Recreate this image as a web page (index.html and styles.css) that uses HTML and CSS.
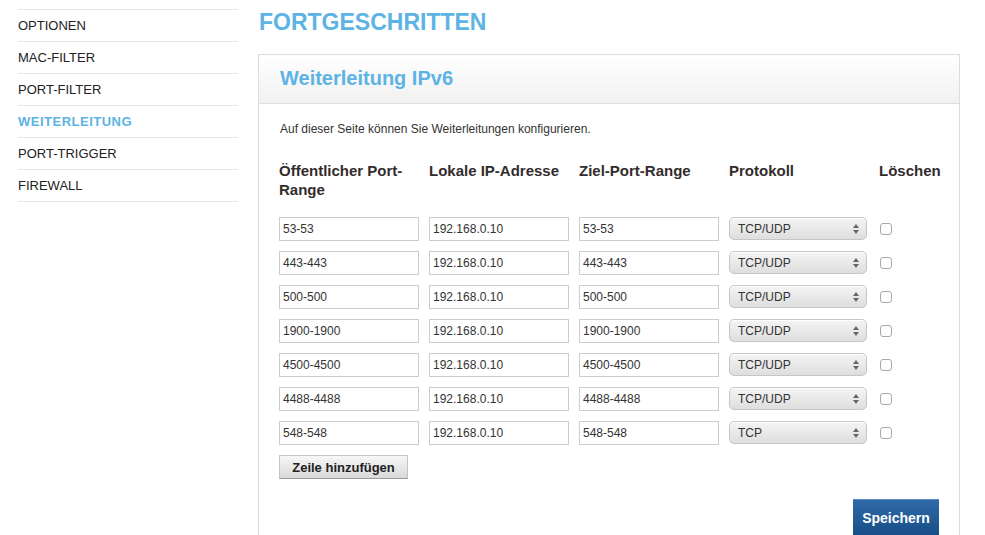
FILE: index.html
```html
<!DOCTYPE html>
<html lang="de">
<head>
    <meta charset="UTF-8">
    <title>Weiterleitung IPv6</title>
    <link rel="stylesheet" href="styles.css">
</head>
<body>
    <div class="page">
        <div class="sidebar">
            <ul class="menu">
                <li>OPTIONEN</li>
                <li>MAC-FILTER</li>
                <li>PORT-FILTER</li>
                <li class="active">WEITERLEITUNG</li>
                <li>PORT-TRIGGER</li>
                <li>FIREWALL</li>
            </ul>
        </div>

        <div class="main">
            <h1>FORTGESCHRITTEN</h1>

            <div class="panel">
                <div class="panel-header">
                    <h2>Weiterleitung IPv6</h2>
                </div>
                <div class="panel-body">
                    <p class="desc">Auf dieser Seite können Sie Weiterleitungen konfigurieren.</p>

                    <div class="grid">
                        <div class="th">Öffentlicher Port-Range</div>
                        <div class="th">Lokale IP-Adresse</div>
                        <div class="th">Ziel-Port-Range</div>
                        <div class="th">Protokoll</div>
                        <div class="th">Löschen</div>

                        <input type="text" value="53-53">
                        <input type="text" value="192.168.0.10">
                        <input type="text" value="53-53">
                        <div class="select"><span>TCP/UDP</span><svg width="6" height="10" viewBox="0 0 6 10"><path d="M3 0 L6 4 L0 4 Z M0 6 L6 6 L3 10 Z" fill="#666"/></svg></div>
                        <div class="cell"><input type="checkbox"></div>

                        <input type="text" value="443-443">
                        <input type="text" value="192.168.0.10">
                        <input type="text" value="443-443">
                        <div class="select"><span>TCP/UDP</span><svg width="6" height="10" viewBox="0 0 6 10"><path d="M3 0 L6 4 L0 4 Z M0 6 L6 6 L3 10 Z" fill="#666"/></svg></div>
                        <div class="cell"><input type="checkbox"></div>

                        <input type="text" value="500-500">
                        <input type="text" value="192.168.0.10">
                        <input type="text" value="500-500">
                        <div class="select"><span>TCP/UDP</span><svg width="6" height="10" viewBox="0 0 6 10"><path d="M3 0 L6 4 L0 4 Z M0 6 L6 6 L3 10 Z" fill="#666"/></svg></div>
                        <div class="cell"><input type="checkbox"></div>

                        <input type="text" value="1900-1900">
                        <input type="text" value="192.168.0.10">
                        <input type="text" value="1900-1900">
                        <div class="select"><span>TCP/UDP</span><svg width="6" height="10" viewBox="0 0 6 10"><path d="M3 0 L6 4 L0 4 Z M0 6 L6 6 L3 10 Z" fill="#666"/></svg></div>
                        <div class="cell"><input type="checkbox"></div>

                        <input type="text" value="4500-4500">
                        <input type="text" value="192.168.0.10">
                        <input type="text" value="4500-4500">
                        <div class="select"><span>TCP/UDP</span><svg width="6" height="10" viewBox="0 0 6 10"><path d="M3 0 L6 4 L0 4 Z M0 6 L6 6 L3 10 Z" fill="#666"/></svg></div>
                        <div class="cell"><input type="checkbox"></div>

                        <input type="text" value="4488-4488">
                        <input type="text" value="192.168.0.10">
                        <input type="text" value="4488-4488">
                        <div class="select"><span>TCP/UDP</span><svg width="6" height="10" viewBox="0 0 6 10"><path d="M3 0 L6 4 L0 4 Z M0 6 L6 6 L3 10 Z" fill="#666"/></svg></div>
                        <div class="cell"><input type="checkbox"></div>

                        <input type="text" value="548-548">
                        <input type="text" value="192.168.0.10">
                        <input type="text" value="548-548">
                        <div class="select"><span>TCP</span><svg width="6" height="10" viewBox="0 0 6 10"><path d="M3 0 L6 4 L0 4 Z M0 6 L6 6 L3 10 Z" fill="#666"/></svg></div>
                        <div class="cell"><input type="checkbox"></div>
                    </div>

                    <button class="add-btn">Zeile hinzufügen</button>

                    <div class="actions">
                        <button class="save-btn">Speichern</button>
                    </div>
                </div>
            </div>
        </div>
    </div>
</body>
</html>
```

FILE: styles.css
```css
* {
    margin: 0;
    padding: 0;
    box-sizing: border-box;
}
body {
    font-family: "Liberation Sans", Arial, sans-serif;
    background: #fff;
    color: #333;
}
.page {
    display: flex;
    align-items: flex-start;
}
.sidebar {
    width: 238px;
    padding: 9px 0 0 18px;
    flex-shrink: 0;
}
.menu {
    list-style: none;
    border-top: 1px solid #e6e6e6;
}
.menu li {
    height: 32px;
    line-height: 31px;
    border-bottom: 1px solid #e6e6e6;
    font-size: 13px;
    color: #222;
}
.menu li.active {
    color: #5cb3e4;
    font-weight: bold;
    letter-spacing: 0.5px;
}
.main {
    padding: 8px 0 0 20px;
}
h1 {
    font-size: 23px;
    line-height: 28px;
    color: #5cb3e4;
    font-weight: bold;
    margin-left: 1px;
}
.panel {
    margin-top: 18px;
    width: 702px;
    border: 1px solid #dcdcdc;
    border-bottom: none;
}
.panel-header {
    height: 49px;
    padding: 11px 0 0 21px;
    background: linear-gradient(#ffffff, #f1f1f1);
    border-bottom: 1px solid #dedede;
}
h2 {
    font-size: 20px;
    line-height: 24px;
    color: #5cb3e4;
}
.panel-body {
    padding: 17px 20px 0 20px;
}
.desc {
    font-size: 12px;
    line-height: 16px;
    margin: 0 0 24px 1px;
    color: #333;
}
.grid {
    display: grid;
    grid-template-columns: repeat(5, 150px);
    row-gap: 10px;
}
.th {
    font-size: 15px;
    font-weight: bold;
    line-height: 19px;
    color: #332c2c;
    padding-right: 4px;
    padding-bottom: 8px;
}
.grid input[type="text"] {
    width: 140px;
    height: 24px;
    border: 1px solid #cccccc;
    padding: 0 3px;
    font-family: "Liberation Sans", Arial, sans-serif;
    font-size: 12px;
    color: #333;
    outline: none;
}
.select {
    width: 138px;
    height: 23px;
    border: 1px solid #c6c6c6;
    border-radius: 5px;
    background: linear-gradient(#f4f4f4, #e9e9e9 50%, #dedede);
    box-shadow: inset 0 1px 0 #fff;
    display: flex;
    align-items: center;
    justify-content: space-between;
    padding: 0 7px 0 8px;
    font-size: 12px;
    color: #333;
}
.cell {
    display: flex;
    align-items: center;
    padding-left: 1px;
}
.cell input {
    appearance: none;
    width: 12px;
    height: 12px;
    border: 1px solid #a8a8a8;
    border-radius: 3px;
    background: #fff;
}
button {
    font-family: "Liberation Sans", Arial, sans-serif;
    font-weight: bold;
    cursor: pointer;
}
.add-btn {
    margin-top: 10px;
    width: 129px;
    height: 24px;
    font-size: 13px;
    color: #222;
    border: 1px solid #c4c4c4;
    border-bottom-color: #9a9a9a;
    background: linear-gradient(#f7f7f7, #d9d9d9);
}
.actions {
    display: flex;
    justify-content: flex-end;
    margin-top: 20px;
}
.save-btn {
    width: 86px;
    height: 38px;
    font-size: 14px;
    color: #fff;
    border: none;
    border-top: 1px solid #5b8fc4;
    background: linear-gradient(#2f6ba7, #174c86);
    padding-bottom: 2px;
}
```
